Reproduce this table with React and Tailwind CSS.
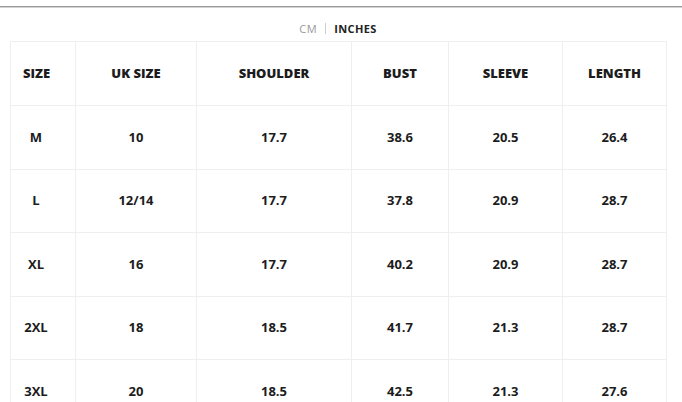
import React from "react";

const cols = [
  { label: "SIZE", w: "w-[65px]" },
  { label: "UK SIZE", w: "w-[121px]" },
  { label: "SHOULDER", w: "w-[155px]" },
  { label: "BUST", w: "w-[97px]" },
  { label: "SLEEVE", w: "w-[114px]" },
  { label: "LENGTH", w: "w-[104px]" },
];

const rows = [
  ["M", "10", "17.7", "38.6", "20.5", "26.4"],
  ["L", "12/14", "17.7", "37.8", "20.9", "28.7"],
  ["XL", "16", "17.7", "40.2", "20.9", "28.7"],
  ["2XL", "18", "18.5", "41.7", "21.3", "28.7"],
  ["3XL", "20", "18.5", "42.5", "21.3", "27.6"],
];

export default function App() {
  return (
    <div
      className="w-[682px] h-[402px] overflow-hidden bg-white text-[#1c1c1c]"
      style={{ fontFamily: '"Open Sans", "Liberation Sans", sans-serif' }}
    >
      <div className="h-[6px]" />
      <div className="h-[1px] bg-[#9a9a9a]" />
      <div className="h-[1px] bg-[#d4d4d4]" />
      <div className="h-[33px] pt-[13px] pr-[6px] flex items-start justify-center text-[11px] leading-[15px] tracking-[0.6px]">
        <span className="text-[#999]">CM</span>
        <span className="ml-[8px] mr-[8px] mt-[2px] w-px h-[11px] bg-[#ccc]" />
        <span className="font-bold text-[#222] tracking-[0.4px]">INCHES</span>
      </div>
      <div className="ml-[10px] w-[657px] border-l border-t border-[#efefef]">
        <div className="flex h-[64px]">
          {cols.map((c, i) => (
            <div
              key={i}
              className={`${c.w} shrink-0 flex items-center border-r border-b border-[#efefef] text-[13px] font-extrabold ${i === 0 ? "justify-start pl-[12px]" : "justify-center"}`}
            >
              {c.label}
            </div>
          ))}
        </div>
        {rows.map((r, ri) => (
          <div key={ri} className="flex h-[63.5px]">
            {r.map((v, i) => (
              <div
                key={i}
                className={`${cols[i].w} shrink-0 flex items-center justify-center border-r border-b border-[#efefef] text-[13px] font-bold ${i === 0 ? "pr-[14px]" : ""}`}
              >
                {v}
              </div>
            ))}
          </div>
        ))}
      </div>
    </div>
  );
}
